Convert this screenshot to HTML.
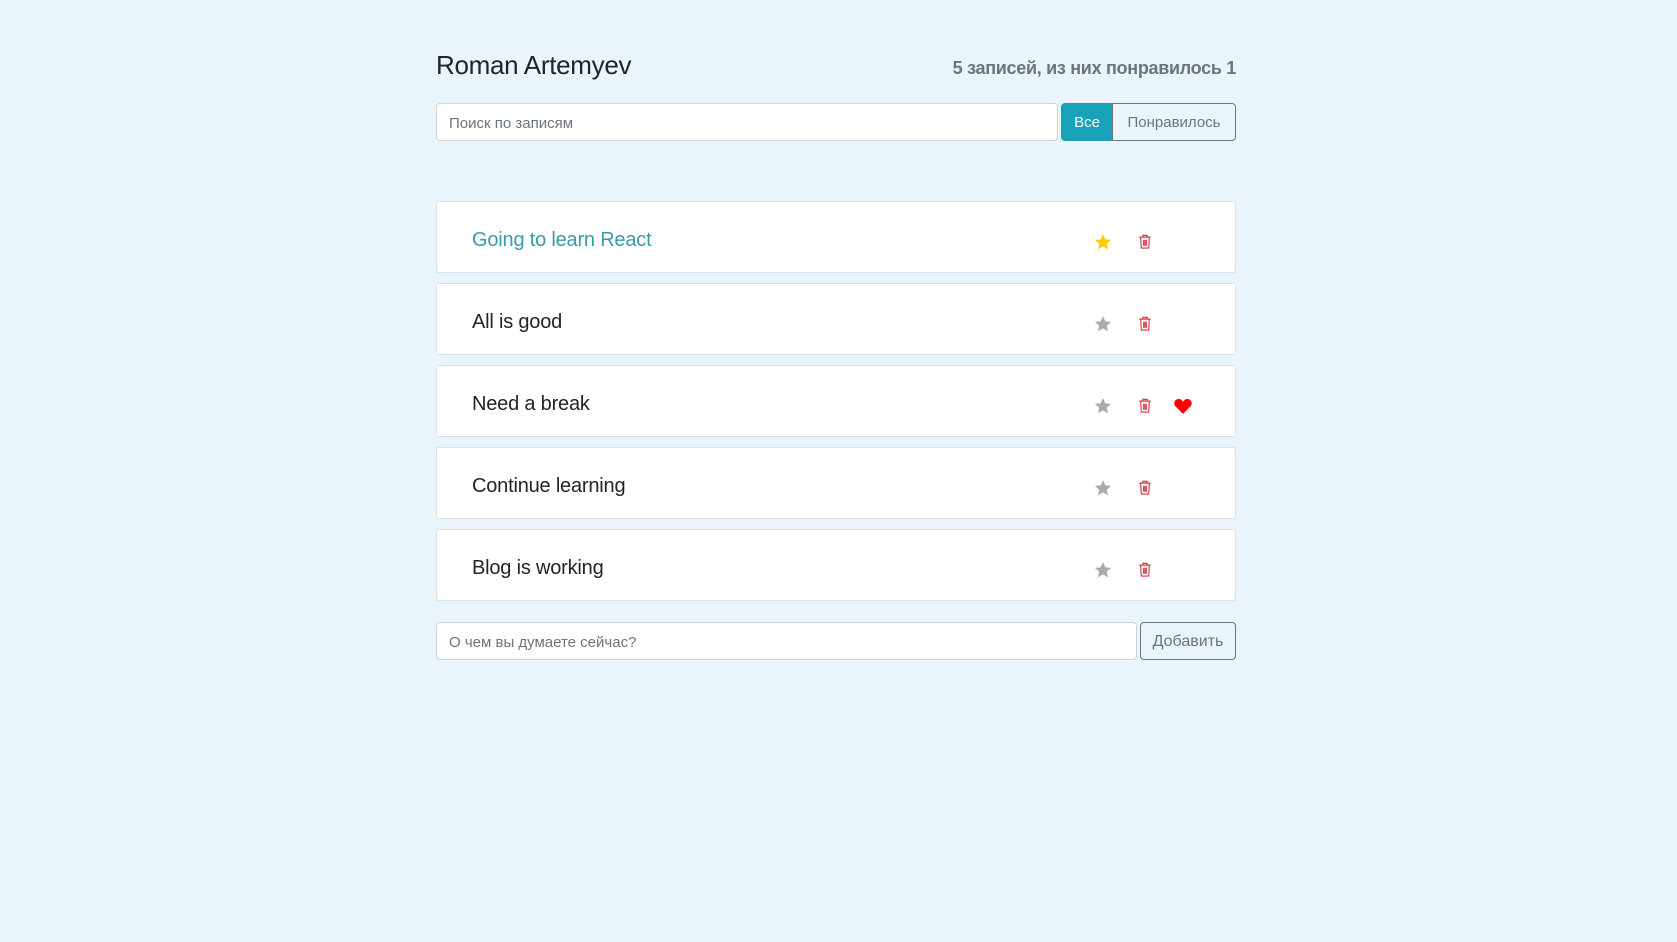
<!DOCTYPE html>
<html><head><meta charset="utf-8"><style>
body{margin:0;background:#e9f4fb;font-family:"Liberation Sans",sans-serif;width:1677px;height:942px;position:relative;color:#212529}
.a{position:absolute}
.title{left:436px;top:50px;font-size:26px;font-weight:500;letter-spacing:-0.3px}
.count{right:441px;top:58px;font-size:18px;font-weight:bold;color:#6c757d;letter-spacing:-0.3px}
.inp{background:#fff;border:1px solid #ced4da;border-radius:4px;box-sizing:border-box;color:#6c757d;font-size:15px;padding-left:12px;display:flex;align-items:center;padding-top:2px}
.btn{box-sizing:border-box;display:flex;align-items:center;justify-content:center;font-size:15px;border:1px solid #6c757d;color:#6c757d;padding-top:1px}
.card{left:436px;width:800px;height:72px;background:#fff;border:1px solid #dde2e6;box-sizing:border-box;border-radius:3px}
.card span{position:absolute;left:35px;top:27px;font-size:20px;letter-spacing:-0.2px}
.ic{position:absolute;top:31px}
</style></head><body>
<div class="a title">Roman Artemyev</div>
<div class="a count">5 записей, из них понравилось 1</div>
<div class="a inp" style="left:436px;top:103px;width:622px;height:38px">Поиск по записям</div>
<div class="a btn" style="left:1061px;top:103px;width:52px;height:38px;background:#17a2b8;border-color:#17a2b8;color:#fff;border-radius:4px 0 0 4px">Все</div>
<div class="a btn" style="left:1112px;top:103px;width:124px;height:38px;border-radius:0 4px 4px 0">Понравилось</div>

<div id="cards"></div>
<div class="a inp" style="left:436px;top:622px;width:701px;height:38px">О чем вы думаете сейчас?</div>
<div class="a btn" style="left:1140px;top:622px;width:96px;height:38px;border-radius:4px;font-size:16px">Добавить</div>
<script>
var t=["Going to learn React","All is good","Need a break","Continue learning","Blog is working"];
var star=c=>'<svg class="ic" style="left:657px" width="18" height="18" viewBox="0 0 24 24"><path fill="'+c+'" d="M12 1.5l3.2 7 7.6.7-5.8 5.1 1.7 7.5L12 17.9l-6.7 3.9 1.7-7.5L1.2 9.2l7.6-.7z"/></svg>';
var trash='<svg class="ic" style="left:701px" width="14" height="17" viewBox="0 0 16 18"><g fill="none" stroke="#dc3545" stroke-width="1.3"><path d="M1.5 4h13M5.5 4V2h5v2M3 4l.8 12.5h8.4L13 4M6.5 7v7M8 7v7M9.5 7v7"/></g></svg>';
var heart='<svg class="ic" style="left:737px;top:32px" width="18" height="16" viewBox="0 0 24 21"><path fill="#f00" d="M12 21L2 11C-1 8 0 2 6 1c3 0 5 2 6 4 1-2 3-4 6-4 6 1 7 7 4 10z"/></svg>';
var h='';
t.forEach((s,i)=>{h+='<div class="a card" style="top:'+(201+i*82)+'px"><span style="'+(i==0?'color:#3a9aa8':'')+'">'+s+'</span>'+star(i==0?'#fc0':'#aaa')+trash+(i==2?heart:'')+'</div>';});
document.getElementById('cards').innerHTML=h;
</script>
</body></html>
